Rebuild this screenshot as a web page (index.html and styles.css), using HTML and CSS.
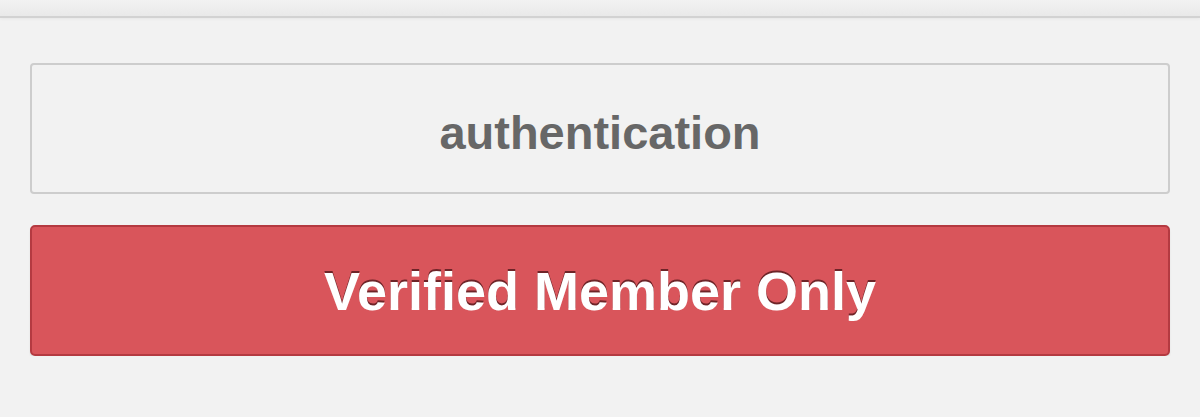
FILE: index.html
```html
<!DOCTYPE html>
<html>
<head>
<meta charset="utf-8">
<link rel="stylesheet" href="styles.css">
</head>
<body>
<div class="topbar"></div>
<main class="panel">
  <div class="field">authentication</div>
  <button class="btn">Verified Member Only</button>
</main>
</body>
</html>
```
FILE: styles.css
```css
html, body {
  margin: 0;
  padding: 0;
  background: #f2f2f2;
  font-family: "Liberation Sans", Arial, sans-serif;
}
.topbar {
  height: 16px;
  background: linear-gradient(#f2f2f2, #e9e9e9);
  border-bottom: 2px solid #d2d2d2;
  box-shadow: 0 1px 3px rgba(0,0,0,0.05);
}
.panel {
  display: flex;
  flex-direction: column;
  gap: 31px;
  padding: 45px 30px 0 30px;
}
.field {
  box-sizing: border-box;
  height: 131px;
  border: 2px solid #cdcdcd;
  border-radius: 4px;
  background: #f2f2f2;
  display: flex;
  align-items: center;
  justify-content: center;
  color: #676767;
  font-weight: bold;
  font-size: 47px;
  padding-top: 8px;
}
.btn {
  box-sizing: border-box;
  height: 131px;
  border: 2px solid #b43a41;
  border-radius: 5px;
  background: #d9555b;
  color: #ffffff;
  font-family: "Liberation Sans", Arial, sans-serif;
  font-weight: bold;
  font-size: 54px;
  text-shadow: 0 -2px 0 #6e2428;
  box-shadow: 0 2px 2px rgba(0,0,0,0.08);
  padding: 0;
}
```
